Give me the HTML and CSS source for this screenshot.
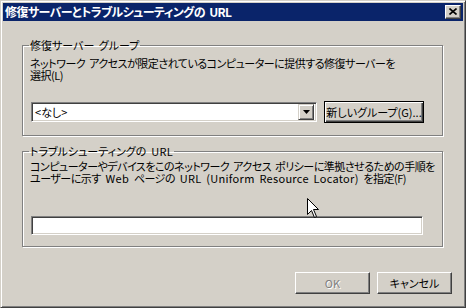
FILE: index.html
```html
<!DOCTYPE html>
<html lang="ja">
<head>
<meta charset="utf-8">
<title>修復サーバーとトラブルシューティングの URL</title>
<link rel="stylesheet" href="styles.css">
</head>
<body>
<div class="window">
  <div class="titlebar">
    <span class="title">修復サーバーとトラブルシューティングの URL</span>
    <span class="close-btn">
      <svg width="8" height="7" viewBox="0 0 8 7"><path d="M0.5 0.5 L7.5 6.5 M7.5 0.5 L0.5 6.5" stroke="#000" stroke-width="1.6" fill="none"/></svg>
    </span>
  </div>
  <div class="body">
    <fieldset class="group group-servers">
      <legend>修復サーバー グループ</legend>
      <p class="desc">ネットワーク アクセスが限定されているコンピューターに提供する修復サーバーを<br>選択(L)</p>
      <div class="combo-row">
        <div class="combo">
          <span class="combo-value">&lt;なし&gt;</span>
          <span class="combo-arrow"><svg width="7" height="4" viewBox="0 0 7 4"><path d="M0 0 H7 L3.5 4 Z" fill="#000"/></svg></span>
        </div>
        <span class="btn btn-default">新しいグループ(G)...</span>
      </div>
    </fieldset>
    <fieldset class="group group-url">
      <legend>トラブルシューティングの<span class="lat"> URL</span></legend>
      <p class="desc">コンピューターやデバイスをこのネットワーク アクセス ポリシーに準拠させるための手順を<br>ユーザーに示す<span class="lat"> Web </span>ページの<span class="lat"> URL (Uniform Resource Locator) </span>を指定(F)</p>
      <div class="textbox"></div>
    </fieldset>
    <div class="actions">
      <span class="btn btn-disabled">OK</span>
      <span class="btn">キャンセル</span>
    </div>
  </div>
  <svg class="cursor" width="13" height="21" viewBox="0 0 13 21"><path d="M0.5 0.5 L0.5 16.5 L4.5 12.5 L7.5 19.5 L9.5 18.5 L6.5 11.5 L11.5 11.5 Z" fill="#fff" stroke="#000" stroke-width="1" stroke-linejoin="miter"/></svg>
</div>
</body>
</html>
```
FILE: styles.css
```css
* { box-sizing: border-box; }
html, body { margin: 0; padding: 0; }
body {
  width: 466px;
  height: 308px;
  overflow: hidden;
  background: #d4d0c8;
  font-family: "Noto Sans CJK JP", "Noto Sans", sans-serif;
  font-size: 11px;
  font-feature-settings: "palt";
  color: #000;
}
.window {
  position: relative;
  width: 466px;
  height: 308px;
  background: #d4d0c8;
  border: 1px solid;
  border-color: #d4d0c8 #404040 #404040 #d4d0c8;
  box-shadow: inset 1px 1px 0 #fff, inset -1px -1px 0 #808080;
  padding: 2px;
  display: flex;
  flex-direction: column;
}
.titlebar {
  flex-shrink: 0;
  height: 18px;
  background: #0a246a;
  display: flex;
  align-items: center;
  justify-content: space-between;
  padding: 0 2px 0 2px;
}
.title {
  color: #fff;
  font-weight: bold;
  font-size: 12px;
  letter-spacing: -0.6px;
  word-spacing: 2px;
  line-height: 14px;
  white-space: nowrap;
}
.close-btn {
  width: 16px;
  height: 14px;
  background: #d4d0c8;
  border: 1px solid;
  border-color: #fff #404040 #404040 #fff;
  box-shadow: inset -1px -1px 0 #808080;
  display: flex;
  align-items: center;
  justify-content: center;
  padding-bottom: 1px;
}
.body {
  flex: 1;
  display: flex;
  flex-direction: column;
}
.group {
  flex-shrink: 0;
  margin: 0 20px 0 19px;
  border: 1px solid #808080;
  box-shadow: 1px 1px 0 #fff, inset 1px 1px 0 #fff;
  padding: 0 8px 0 8px;
  min-width: 0;
}
.group legend {
  margin-left: -2px;
  padding: 0 1px;
  line-height: 14px;
  word-spacing: 2px;
  white-space: nowrap;
}
.lat {
  letter-spacing: 0.3px;
}
.group-servers {
  margin-top: 17px;
  padding-top: 5px;
  padding-bottom: 12px;
}
.group-url {
  margin-top: 8px;
  padding-top: 2px;
  padding-bottom: 11px;
}
.desc {
  margin: 0 0 0 -1px;
  line-height: 12px;
  letter-spacing: -0.5px;
  word-spacing: 2px;
  white-space: nowrap;
}
.combo-row {
  display: flex;
  align-items: center;
  gap: 7px;
  margin-top: 20px;
}
.combo {
  width: 286px;
  height: 20px;
  background: #fff;
  border: 1px solid;
  border-color: #808080 #fff #fff #808080;
  box-shadow: inset 1px 1px 0 #404040, inset -1px -1px 0 #d4d0c8;
  display: flex;
  align-items: center;
  justify-content: space-between;
  padding: 2px 2px 2px 3px;
}
.combo-value {
  line-height: 14px;
}
.combo-arrow {
  width: 16px;
  height: 16px;
  background: #d4d0c8;
  border: 1px solid;
  border-color: #d4d0c8 #404040 #404040 #d4d0c8;
  box-shadow: inset 1px 1px 0 #fff, inset -1px -1px 0 #808080;
  display: flex;
  align-items: center;
  justify-content: center;
}
.btn {
  flex-shrink: 0;
  display: flex;
  align-items: center;
  justify-content: center;
  height: 22px;
  width: 75px;
  background: #d4d0c8;
  border: 1px solid;
  border-color: #fff #404040 #404040 #fff;
  box-shadow: inset -1px -1px 0 #808080, inset 1px 1px 0 #d4d0c8;
  line-height: 14px;
  white-space: nowrap;
}
.btn-default {
  width: 100px;
  height: 22px;
  border-color: #000;
  box-shadow: inset 1px 1px 0 #fff, inset -1px -1px 0 #404040, inset -2px -2px 0 #808080;
}
.btn-disabled {
  color: #808080;
  text-shadow: 1px 1px 0 #fff;
}
.textbox {
  width: 392px;
  height: 19px;
  margin-top: 32px;
  background: #fff;
  border: 1px solid;
  border-color: #808080 #fff #fff #808080;
  box-shadow: inset 1px 1px 0 #404040, inset -1px -1px 0 #d4d0c8;
}
.actions {
  flex-shrink: 0;
  display: flex;
  justify-content: flex-end;
  gap: 7px;
  margin-top: 25px;
  padding-right: 11px;
}
.cursor {
  position: absolute;
  left: 306px;
  top: 197px;
}
```
